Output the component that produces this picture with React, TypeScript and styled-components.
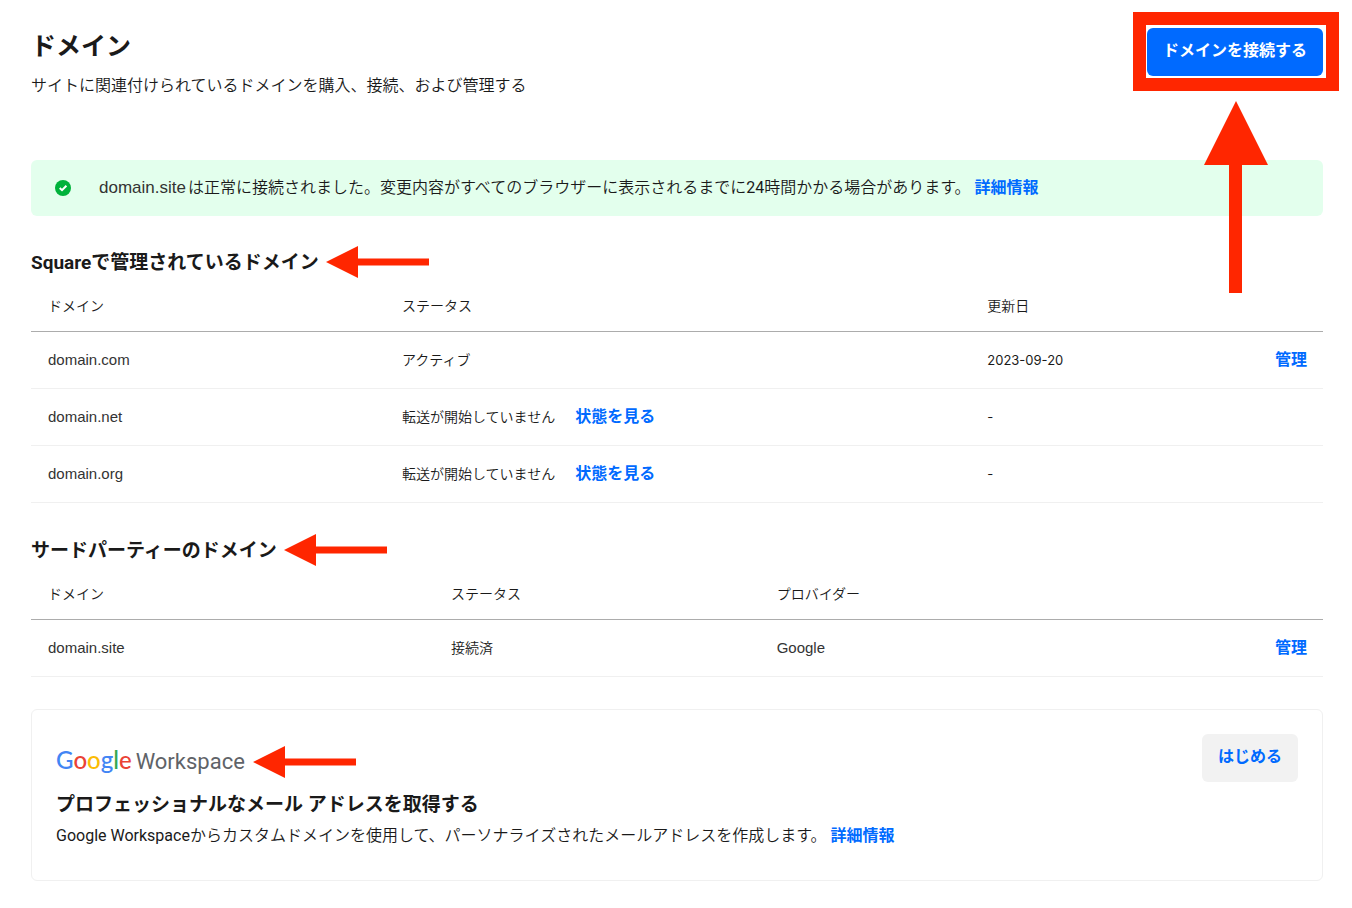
import React from "react";
import styled, { createGlobalStyle } from "styled-components";

const sans = `Roboto, "Noto Sans CJK JP", sans-serif`;
const ink = "#1a1a1a";
const blue = "#006aff";
const red = "#ff2600";

const GlobalStyle = createGlobalStyle`
  *, *::before, *::after { box-sizing: border-box; }
  body {
    margin: 0;
    background: #fff;
    color: ${ink};
    font: 350 16px/24px ${sans};
  }
`;

const Page = styled.main`
  padding: 28px 29px 27px 31px;
`;

const PageHeader = styled.header`
  display: flex;
  justify-content: space-between;
  align-items: flex-start;
  margin-bottom: 62px;
`;

const Title = styled.h1`
  margin: 0 0 8px;
  font-size: 25px;
  line-height: 38px;
  font-weight: 700;
`;

const Text = styled.p`
  margin: 0;
`;

const Regular = styled.span`
  font-weight: 400;
`;

const Callout = styled.div`
  position: relative;
  flex: none;
`;

const CalloutFrame = styled.span`
  position: absolute;
  inset: -16px -16px -15px -14px;
  border: 13px solid ${red};
  pointer-events: none;
`;

const CalloutArrow = styled.svg`
  position: absolute;
  top: 73px;
  left: 57px;
  pointer-events: none;
`;

const Button = styled.button<{ $primary?: boolean }>`
  display: block;
  height: 48px;
  padding: 0 16px 3px;
  border: 0;
  border-radius: 6px;
  font: 700 16px/24px ${sans};
  color: ${(p) => (p.$primary ? "#fff" : blue)};
  background: ${(p) => (p.$primary ? blue : "#f2f2f2")};
  cursor: pointer;
`;

const Link = styled.a`
  color: ${blue};
  font-size: 16px;
  font-weight: 700;
  text-decoration: none;
`;

const Banner = styled.div`
  display: flex;
  align-items: center;
  gap: 28px;
  min-height: 56px;
  margin-bottom: 32px;
  padding: 0 24px;
  border-radius: 6px;
  background: #e3ffed;
`;

const Latin = styled.span`
  font-family: "Liberation Sans", Arial, sans-serif;
  font-size: 15px;
  font-weight: 400;
  color: #333;
`;

const BannerDomain = styled(Latin)`
  margin-right: 2px;
  font-size: 17px;
`;

const DateText = styled.time`
  font-family: Inter, sans-serif;
  font-size: 13px;
  font-weight: 400;
`;

const Section = styled.section`
  & + & {
    margin-top: 33px;
  }
`;

const SectionHeading = styled.div`
  display: flex;
  align-items: center;
  gap: 7px;
  height: 30px;

  svg {
    margin-bottom: 3px;
  }
`;

const Heading = styled.h2`
  margin: 0;
  font-size: 19px;
  line-height: 30px;
  font-weight: 700;
`;

const Table = styled.table`
  width: 100%;
  table-layout: fixed;
  border-collapse: separate;
  border-spacing: 0;
  font-size: 14px;
  line-height: 20px;
`;

const Col = styled.col<{ $share?: string }>`
  width: ${(p) => p.$share ?? "auto"};
`;

const Th = styled.th`
  height: 54px;
  padding: 2px 16px 0 17px;
  border-bottom: 1px solid #acacac;
  font-weight: inherit;
  text-align: left;
`;

const Td = styled.td<{ $end?: boolean }>`
  height: 57px;
  padding: 0 16px 1px 17px;
  border-bottom: 1px solid #f0f0f0;
  text-align: ${(p) => (p.$end ? "right" : "left")};
`;

const Status = styled.div`
  display: flex;
  align-items: center;
  gap: 20px;
`;

const Card = styled.section`
  display: flex;
  justify-content: space-between;
  align-items: flex-start;
  margin-top: 32px;
  padding: 24px 24px 32px;
  border: 1px solid #f0f0f0;
  border-radius: 6px;
`;

const Brand = styled.div`
  display: flex;
  align-items: center;
  gap: 8px;
  height: 56px;
`;

const Wordmark = styled.span`
  display: flex;
  align-items: baseline;
  gap: 4px;
  padding-bottom: 3px;
  font: 400 22px/32px Roboto, sans-serif;
  color: #5f6368;
`;

const GoogleWord = styled.span`
  font-family: Lato, sans-serif;
  font-size: 24px;
  font-weight: 500;
`;

const Letter = styled.span<{ $color: string }>`
  color: ${(p) => p.$color};
`;

const CardHeading = styled(Heading)`
  margin-bottom: 4px;
`;

const LeftArrow = () => (
  <svg width="103" height="32" viewBox="0 0 103 32" aria-hidden="true">
    <path d="M0 16 32 0V12.5H103V19.5H32V32Z" fill={red} />
  </svg>
);

const CheckBadge = () => (
  <svg width="16" height="16" viewBox="0 0 16 16" aria-hidden="true">
    <circle cx="8" cy="8" r="8" fill="#00b23b" />
    <path d="M4.7 8.1 7 10.2 11.4 5.8" fill="none" stroke="#fff" strokeWidth="2" />
  </svg>
);

const wordmarkLetters = [
  ["G", "#4285f4"],
  ["o", "#ea4335"],
  ["o", "#fbbc04"],
  ["g", "#4285f4"],
  ["l", "#34a853"],
  ["e", "#ea4335"],
];

const managed = [
  { name: "domain.com", status: "アクティブ", updated: "2023-09-20", active: true },
  { name: "domain.net", status: "転送が開始していません", updated: "-", active: false },
  { name: "domain.org", status: "転送が開始していません", updated: "-", active: false },
];

export default function App() {
  return (
    <Page lang="ja">
      <GlobalStyle />
      <PageHeader>
        <div>
          <Title>ドメイン</Title>
          <Text>サイトに関連付けられているドメインを購入、接続、および管理する</Text>
        </div>
        <Callout>
          <Button $primary>ドメインを接続する</Button>
          <CalloutFrame />
          <CalloutArrow width="64" height="192" viewBox="0 0 64 192" aria-hidden="true">
            <path d="M32 0 64 64H38V192H25V64H0Z" fill={red} />
          </CalloutArrow>
        </Callout>
      </PageHeader>

      <Banner role="status">
        <CheckBadge />
        <Text>
          <BannerDomain>domain.site</BannerDomain>
          は正常に接続されました。変更内容がすべてのブラウザーに表示されるまでに
          <Regular>24</Regular>時間かかる場合があります。{" "}
          <Link href="#status">詳細情報</Link>
        </Text>
      </Banner>

      <Section>
        <SectionHeading>
          <Heading>Squareで管理されているドメイン</Heading>
          <LeftArrow />
        </SectionHeading>
        <Table>
          <colgroup>
            <Col $share="27.4%" />
            <Col $share="45.3%" />
            <Col $share="14%" />
            <Col />
          </colgroup>
          <thead>
            <tr>
              <Th>ドメイン</Th>
              <Th>ステータス</Th>
              <Th>更新日</Th>
              <Th aria-label="操作" />
            </tr>
          </thead>
          <tbody>
            {managed.map((d) => (
              <tr key={d.name}>
                <Td>
                  <Latin>{d.name}</Latin>
                </Td>
                <Td>
                  <Status>
                    {d.status}
                    {!d.active && <Link href="#state">状態を見る</Link>}
                  </Status>
                </Td>
                <Td>
                  <DateText>{d.updated}</DateText>
                </Td>
                <Td $end>{d.active && <Link href="#manage">管理</Link>}</Td>
              </tr>
            ))}
          </tbody>
        </Table>
      </Section>

      <Section>
        <SectionHeading>
          <Heading>サードパーティーのドメイン</Heading>
          <LeftArrow />
        </SectionHeading>
        <Table>
          <colgroup>
            <Col $share="31.2%" />
            <Col $share="25.2%" />
            <Col $share="25%" />
            <Col />
          </colgroup>
          <thead>
            <tr>
              <Th>ドメイン</Th>
              <Th>ステータス</Th>
              <Th>プロバイダー</Th>
              <Th aria-label="操作" />
            </tr>
          </thead>
          <tbody>
            <tr>
              <Td>
                <Latin>domain.site</Latin>
              </Td>
              <Td>接続済</Td>
              <Td>
                <Latin>Google</Latin>
              </Td>
              <Td $end>
                <Link href="#manage">管理</Link>
              </Td>
            </tr>
          </tbody>
        </Table>
      </Section>

      <Card>
        <div>
          <Brand>
            <Wordmark>
              <GoogleWord>
                {wordmarkLetters.map(([letter, color], i) => (
                  <Letter key={i} $color={color}>
                    {letter}
                  </Letter>
                ))}
              </GoogleWord>
              <span>Workspace</span>
            </Wordmark>
            <LeftArrow />
          </Brand>
          <CardHeading>プロフェッショナルなメール アドレスを取得する</CardHeading>
          <Text>
            <Regular>Google Workspace</Regular>
            からカスタムドメインを使用して、パーソナライズされたメールアドレスを作成します。{" "}
            <Link href="#workspace">詳細情報</Link>
          </Text>
        </div>
        <Button>はじめる</Button>
      </Card>
    </Page>
  );
}
